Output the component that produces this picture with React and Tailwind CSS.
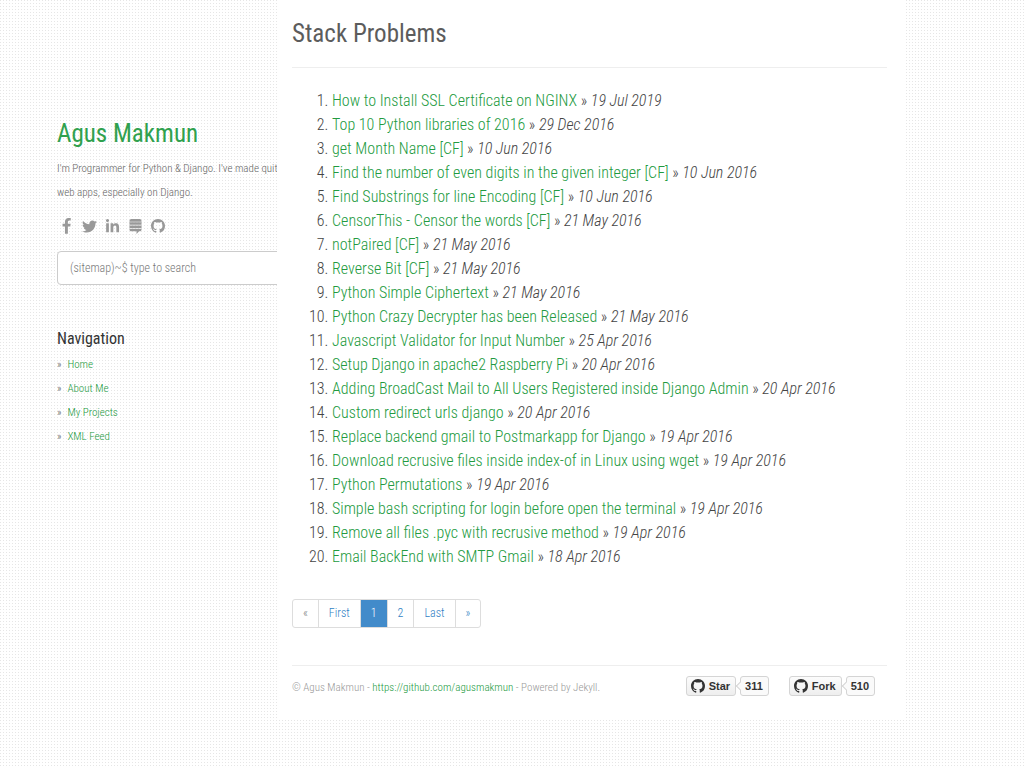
import React from "react";
import { FaTwitter, FaLinkedinIn, FaStackExchange } from "react-icons/fa";

const POSTS = [
  ["How to Install SSL Certificate on NGINX", "19 Jul 2019"],
  ["Top 10 Python libraries of 2016", "29 Dec 2016"],
  ["get Month Name [CF]", "10 Jun 2016"],
  ["Find the number of even digits in the given integer [CF]", "10 Jun 2016"],
  ["Find Substrings for line Encoding [CF]", "10 Jun 2016"],
  ["CensorThis - Censor the words [CF]", "21 May 2016"],
  ["notPaired [CF]", "21 May 2016"],
  ["Reverse Bit [CF]", "21 May 2016"],
  ["Python Simple Ciphertext", "21 May 2016"],
  ["Python Crazy Decrypter has been Released", "21 May 2016"],
  ["Javascript Validator for Input Number", "25 Apr 2016"],
  ["Setup Django in apache2 Raspberry Pi", "20 Apr 2016"],
  ["Adding BroadCast Mail to All Users Registered inside Django Admin", "20 Apr 2016"],
  ["Custom redirect urls django", "20 Apr 2016"],
  ["Replace backend gmail to Postmarkapp for Django", "19 Apr 2016"],
  ["Download recrusive files inside index-of in Linux using wget", "19 Apr 2016"],
  ["Python Permutations", "19 Apr 2016"],
  ["Simple bash scripting for login before open the terminal", "19 Apr 2016"],
  ["Remove all files .pyc with recrusive method", "19 Apr 2016"],
  ["Email BackEnd with SMTP Gmail", "18 Apr 2016"],
];

function GithubMark({ className }) {
  return (
    <svg viewBox="0 0 16 16" className={className} fill="currentColor" aria-hidden="true">
      <path d="M8 0C3.58 0 0 3.58 0 8c0 3.54 2.29 6.53 5.47 7.59.4.07.55-.17.55-.38 0-.19-.01-.82-.01-1.49-2.01.37-2.53-.49-2.69-.94-.09-.23-.48-.94-.82-1.13-.28-.15-.68-.52-.01-.53.63-.01 1.08.58 1.23.82.72 1.21 1.87.87 2.33.66.07-.52.28-.87.51-1.07-1.78-.2-3.64-.89-3.64-3.95 0-.87.31-1.59.82-2.15-.08-.2-.36-1.02.08-2.12 0 0 .67-.21 2.2.82.64-.18 1.32-.27 2-.27s1.36.09 2 .27c1.53-1.04 2.2-.82 2.2-.82.44 1.1.16 1.92.08 2.12.51.56.82 1.27.82 2.15 0 3.07-1.87 3.75-3.65 3.95.29.25.54.73.54 1.48 0 1.07-.01 1.93-.01 2.2 0 .21.15.46.55.38A8.01 8.01 0 0 0 16 8c0-4.42-3.58-8-8-8z" />
    </svg>
  );
}

function FacebookMark({ className }) {
  return (
    <svg viewBox="0 0 1792 1792" className={className} fill="currentColor" aria-hidden="true">
      <path d="M1343 12v264h-157q-86 0-116 36t-30 108v189h293l-39 296h-254v759h-306v-759h-255v-296h255v-218q0-186 104-288.5t277-102.5q147 0 228 12z" />
    </svg>
  );
}

const SOCIAL = [
  ["Facebook", FacebookMark, "h-[17px] w-[17px]"],
  ["Twitter", FaTwitter, "h-[15px] w-[15px]"],
  ["LinkedIn", FaLinkedinIn, "h-[15px] w-[15px]"],
  ["Stack Exchange", FaStackExchange, "h-[15px] w-[15px]"],
  ["GitHub", GithubMark, "h-[14px] w-[14px]"],
];

function Sidebar() {
  return (
    <aside className="w-[277px] shrink-0 overflow-hidden pl-[57px] pt-[118px]">
      <div className="w-[230px]">
        <h1 className="text-[25px] leading-8 font-normal">
          <a href="#home" className="text-[#30a14e]">Agus Makmun</a>
        </h1>
        <p className="mt-[7px] text-[11px] leading-6 text-[#666]">
          I'm Programmer for Python &amp; Django. I've made quite web apps, especially on Django.
        </p>
        <div className="mt-[13px] flex h-4 items-center gap-[7px] pl-px text-[#999]">
          {SOCIAL.map(([label, Icon, size]) => (
            <a key={label} href="#social" aria-label={label} className="flex w-4 justify-center">
              <Icon className={"shrink-0 " + size} />
            </a>
          ))}
        </div>
        <input
          type="search"
          aria-label="Search"
          placeholder="(sitemap)~$ type to search"
          className="mt-[17px] block h-[34px] w-full rounded border border-[#ccc] bg-white px-3 text-xs outline-none placeholder:text-[#777]"
        />
      </div>
      <h2 className="mt-11 text-base leading-5 font-normal text-[#333]">Navigation</h2>
      <ul className="mt-1 text-[11px] leading-6">
        {["Home", "About Me", "My Projects", "XML Feed"].map((t) => (
          <li key={t} className="flex gap-1.5 text-[#666]">
            <span>»</span>
            <a href="#nav" className="text-[#229a40]">{t}</a>
          </li>
        ))}
      </ul>
    </aside>
  );
}

const PAGES = [
  ["«", "text-[#777]"],
  ["First", "text-[#2f7fc4]"],
  ["1", "text-white bg-[#428bca] border-[#428bca] z-10"],
  ["2", "text-[#2f7fc4]"],
  ["Last", "text-[#2f7fc4]"],
  ["»", "text-[#2f7fc4]"],
];

function GithubCount({ label, count }) {
  return (
    <div className="flex h-5 items-center gap-1 font-['Liberation_Sans',sans-serif] text-[11px] leading-4 font-bold text-[#333]">
      <a href="#github" className="flex h-5 items-center gap-1 rounded-[3px] border border-[#d5d5d5] bg-linear-to-b from-[#fcfcfc] to-[#eee] pr-[5px] pl-1">
        <GithubMark className="h-[14px] w-[14px]" />
        {label}
      </a>
      <a href="#count" className="relative flex h-5 items-center rounded-[3px] border border-[#d4d4d4] bg-[#fafafa] pr-[5px] pl-1">
        <span className="absolute top-[6px] -left-[4px] h-[6px] w-[6px] rotate-45 border-b border-l border-[#d4d4d4] bg-[#fafafa]" />
        {count}
      </a>
    </div>
  );
}

export default function App() {
  return (
    <div className="flex min-h-screen items-start bg-white bg-[conic-gradient(from_270deg_at_1px_1px,#e6e6e6_90deg,transparent_0deg)] bg-[length:3px_3px] font-['Roboto_Condensed','Roboto',sans-serif] font-light">
      <Sidebar />
      <main className="mr-[119px] min-w-0 flex-1 bg-white px-[15px] pr-[18px] pb-5">
        <h2 className="border-b border-[#eee] pt-[18px] pb-[17px] text-[25px] leading-8 font-normal text-[#5c5c5c]">
          Stack Problems
        </h2>
        <ol className="mt-[21px] list-decimal pl-10 text-base leading-6 text-[#444]">
          {POSTS.map(([title, date]) => (
            <li key={title}>
              <a href="#post" className="text-[#229a40]">{title}</a> » <em>{date}</em>
            </li>
          ))}
        </ol>
        <nav aria-label="Pagination" className="mt-[30px] flex text-xs leading-[17px]">
          {PAGES.map(([t, c]) => (
            <a key={t} href="#page" className={"relative -ml-px border border-[#ddd] px-2.5 py-[5px] first:ml-0 first:rounded-l-[3px] last:rounded-r-[3px] " + c}>
              {t}
            </a>
          ))}
        </nav>
        <footer className="mt-[37px] flex items-start justify-between border-t border-[#eee] pt-2.5 pr-3 text-[11px] leading-6 text-[#999]">
          <p>
            © Agus Makmun - <a href="#repo" className="text-[#229a40]">https://github.com/agusmakmun</a> - Powered by Jekyll.
          </p>
          <div className="flex gap-5">
            <GithubCount label="Star" count="311" />
            <GithubCount label="Fork" count="510" />
          </div>
        </footer>
      </main>
    </div>
  );
}
